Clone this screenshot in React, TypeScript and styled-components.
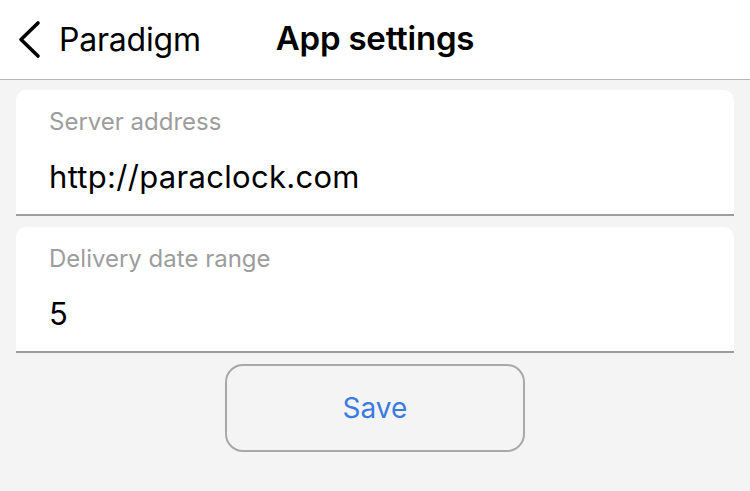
import React from 'react';
import styled, { createGlobalStyle } from 'styled-components';

const GlobalStyle = createGlobalStyle`
    html, body {
        margin: 0;
        padding: 0;
        background: #f4f4f4;
        font-family: Inter, 'Liberation Sans', sans-serif;
    }
`;

const fields = [
    { label: 'Server address', value: 'http://paraclock.com' },
    { label: 'Delivery date range', value: '5' },
];

const BackChevron = () => (
    <svg width="24" height="40" viewBox="0 0 24 40" fill="none">
        <polyline
            points="20,3 3,19.5 20,36"
            stroke="#000"
            strokeWidth="3.6"
            strokeLinecap="round"
            strokeLinejoin="round"
        />
    </svg>
);

const App = () => {
    return (
        <S.Page>
            <GlobalStyle />
            <S.Header>
                <S.Back>
                    <BackChevron />
                    <S.BackLabel>Paradigm</S.BackLabel>
                </S.Back>
                <S.Title>App settings</S.Title>
                <span />
            </S.Header>
            <S.Content>
                {fields.map(f => (
                    <S.Card key={f.label}>
                        <S.Label>{f.label}</S.Label>
                        <S.Value>{f.value}</S.Value>
                    </S.Card>
                ))}
                <S.SaveButton>Save</S.SaveButton>
            </S.Content>
        </S.Page>
    );
};

const S = {
    Page: styled.div`
        width: 750px;
        height: 491px;
        background: #f4f4f4;
        overflow: hidden;
    `,
    Header: styled.header`
        height: 80px;
        box-sizing: border-box;
        padding: 0 0 4px 0;
        background: #ffffff;
        border-bottom: 1px solid #b6b6b6;
        display: grid;
        grid-template-columns: 1fr auto 1fr;
        align-items: center;
    `,
    Back: styled.div`
        display: flex;
        align-items: center;
        gap: 17px;
        padding-left: 18px;
        margin-top: 4px;
    `,
    BackLabel: styled.span`
        font-size: 32px;
        color: #000;
        letter-spacing: -0.2px;
    `,
    Title: styled.h1`
        margin: 0;
        font-size: 33px;
        font-weight: 600;
        color: #000;
        letter-spacing: -0.2px;
    `,
    Content: styled.main`
        padding: 10px 16px 0;
        display: flex;
        flex-direction: column;
        gap: 11px;
    `,
    Card: styled.div`
        height: 126px;
        box-sizing: border-box;
        padding: 17px 33px 0;
        background: #ffffff;
        border-radius: 10px 10px 0 0;
        border-bottom: 2px solid #9c9c9c;
        display: flex;
        flex-direction: column;
    `,
    Label: styled.div`
        font-size: 24px;
        line-height: 30px;
        color: #9d9d9d;
    `,
    Value: styled.div`
        margin-top: 22px;
        font-size: 31px;
        line-height: 36px;
        letter-spacing: 0.3px;
        color: #000;
    `,
    SaveButton: styled.button`
        align-self: center;
        width: 300px;
        height: 88px;
        background: transparent;
        border: 2px solid #a8a8a8;
        border-radius: 18px;
        font-family: Inter, 'Liberation Sans', sans-serif;
        font-size: 28px;
        color: #3a7be0;
        cursor: pointer;
    `,
};

export default App;
